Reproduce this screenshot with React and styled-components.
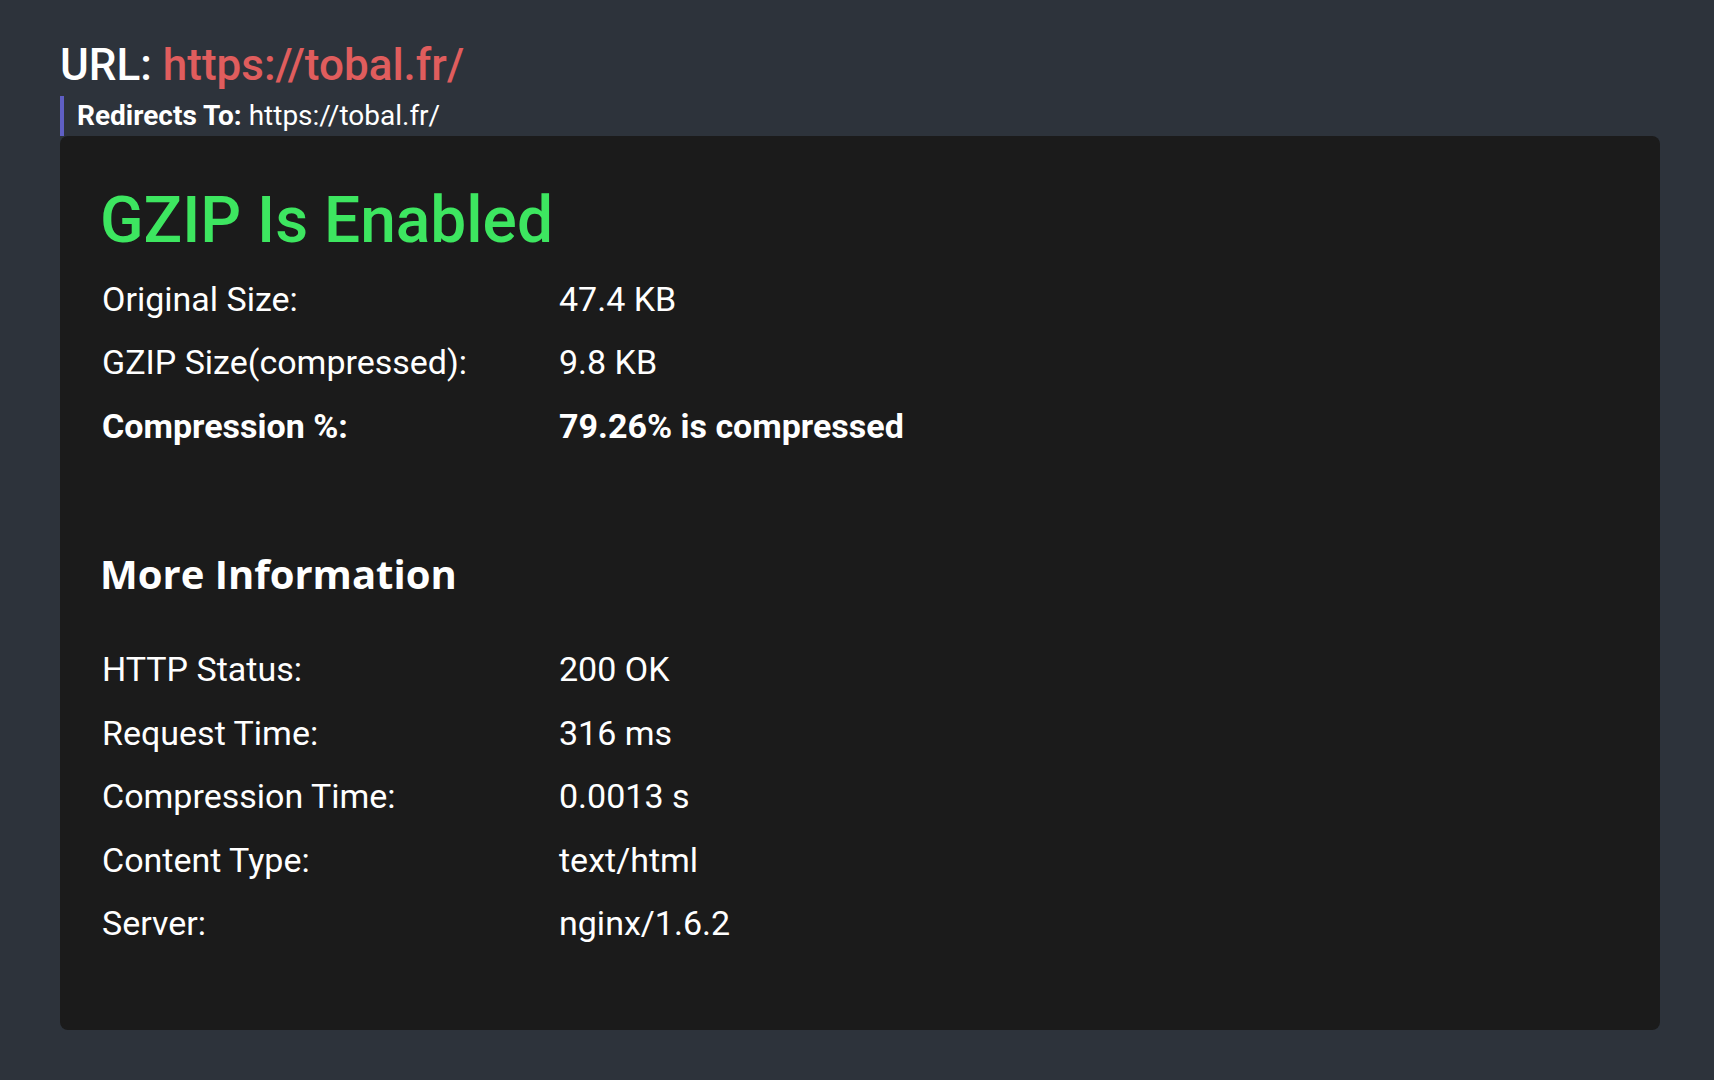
import React from 'react';
import styled, { createGlobalStyle } from 'styled-components';

const GlobalStyle = createGlobalStyle`
  html, body {
    margin: 0;
    padding: 0;
    background-color: #2d333b;
  }
  body {
    font-family: Roboto, "Liberation Sans", Arial, sans-serif;
    color: #ffffff;
  }
`;

const Page = styled.div`
  min-height: 1080px;
  box-sizing: border-box;
  padding: 39px 54px 50px 60px;
`;

const UrlTitle = styled.h1`
  margin: 0;
  font-size: 44px;
  font-weight: 500;
  line-height: normal;
  color: #ffffff;
`;

const UrlLink = styled.span`
  color: #e05d5d;
`;

const Redirect = styled.div`
  margin-top: 5px;
  height: 40px;
  line-height: 40px;
  border-left: 4px solid #5f5fc4;
  padding-left: 13px;
  font-size: 28px;
  color: #ffffff;

  strong {
    font-weight: 700;
  }
`;

const Card = styled.div`
  background-color: #1b1b1b;
  border-radius: 8px;
  padding: 47px 40px 75px 40px;
`;

const Status = styled.h2`
  margin: 0 0 9px 0;
  font-size: 64px;
  font-weight: 500;
  line-height: normal;
  color: #3de660;
`;

const Table = styled.div`
  display: flex;
  flex-direction: column;
`;

const Row = styled.div`
  display: grid;
  grid-template-columns: 457px 1fr;
  height: 63.5px;
  align-items: center;
  padding-left: 2px;
  font-size: 34px;
  font-weight: ${(p) => (p.$bold ? 700 : 400)};
`;

const SectionTitle = styled.h3`
  margin: 88px 0 37px 0;
  font-family: "Open Sans", "Liberation Sans", sans-serif;
  font-size: 40px;
  font-weight: 700;
  line-height: normal;
  color: #ffffff;
`;

const summary = [
  { label: 'Original Size:', value: '47.4 KB' },
  { label: 'GZIP Size(compressed):', value: '9.8 KB' },
  { label: 'Compression %:', value: '79.26% is compressed', bold: true },
];

const details = [
  { label: 'HTTP Status:', value: '200 OK' },
  { label: 'Request Time:', value: '316 ms' },
  { label: 'Compression Time:', value: '0.0013 s' },
  { label: 'Content Type:', value: 'text/html' },
  { label: 'Server:', value: 'nginx/1.6.2' },
];

const App = () => {
  return (
    <>
      <GlobalStyle />
      <Page>
        <UrlTitle>
          URL: <UrlLink>https://tobal.fr/</UrlLink>
        </UrlTitle>
        <Redirect>
          <strong>Redirects To:</strong> https://tobal.fr/
        </Redirect>
        <Card>
          <Status>GZIP Is Enabled</Status>
          <Table>
            {summary.map((r) => (
              <Row key={r.label} $bold={r.bold}>
                <span>{r.label}</span>
                <span>{r.value}</span>
              </Row>
            ))}
          </Table>
          <SectionTitle>More Information</SectionTitle>
          <Table>
            {details.map((r) => (
              <Row key={r.label}>
                <span>{r.label}</span>
                <span>{r.value}</span>
              </Row>
            ))}
          </Table>
        </Card>
      </Page>
    </>
  );
};

export default App;
